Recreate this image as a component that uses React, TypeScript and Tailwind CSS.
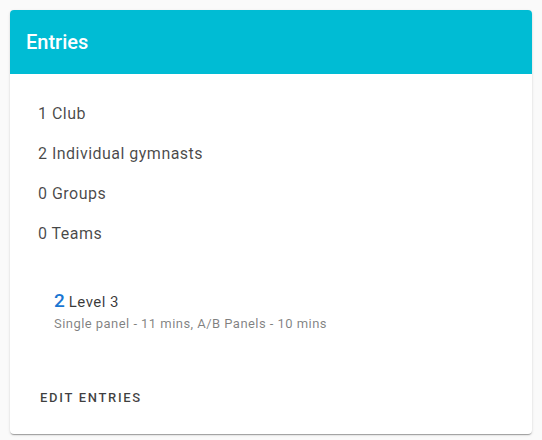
export default function App() {
  return (
    <div className="min-h-screen bg-[#fafafa] p-[10px] font-['Roboto',sans-serif]">
      <div className="bg-white rounded-[4px] overflow-hidden shadow-[0_2px_1px_-1px_rgba(0,0,0,0.2),0_1px_1px_0_rgba(0,0,0,0.14),0_1px_3px_0_rgba(0,0,0,0.12)]">
        {/* header */}
        <div className="bg-[#00bcd4] h-[64px] flex items-center px-4">
          <h2 className="text-white text-[20px] font-medium">Entries</h2>
        </div>

        <div className="pt-[20px] px-[28px] text-[16px] tracking-[0.03em] text-[rgba(0,0,0,0.72)]">
          <div className="h-10 flex items-center">1 Club</div>
          <div className="h-10 flex items-center">2 Individual gymnasts</div>
          <div className="h-10 flex items-center">0 Groups</div>
          <div className="h-10 flex items-center">0 Teams</div>

          <div className="mt-[33px] pl-4 tracking-normal">
            <div className="h-6 flex items-baseline">
              <span className="text-[19px] font-medium text-[#1976d2] mr-1">2</span>
              <span className="text-[15px] tracking-[0.03em] text-[rgba(0,0,0,0.78)]">Level 3</span>
            </div>
            <div className="mt-[3px] text-[13px] tracking-[0.035em] text-[rgba(0,0,0,0.5)]">
              Single panel - 11 mins, A/B Panels - 10 mins
            </div>
          </div>
        </div>

        <div className="pt-[46px] pb-[18px] px-[22px]">
          <button className="h-9 px-2 text-[13px] font-medium tracking-[0.13em] text-[rgba(0,0,0,0.75)] uppercase">
            Edit entries
          </button>
        </div>
      </div>
    </div>
  );
}
